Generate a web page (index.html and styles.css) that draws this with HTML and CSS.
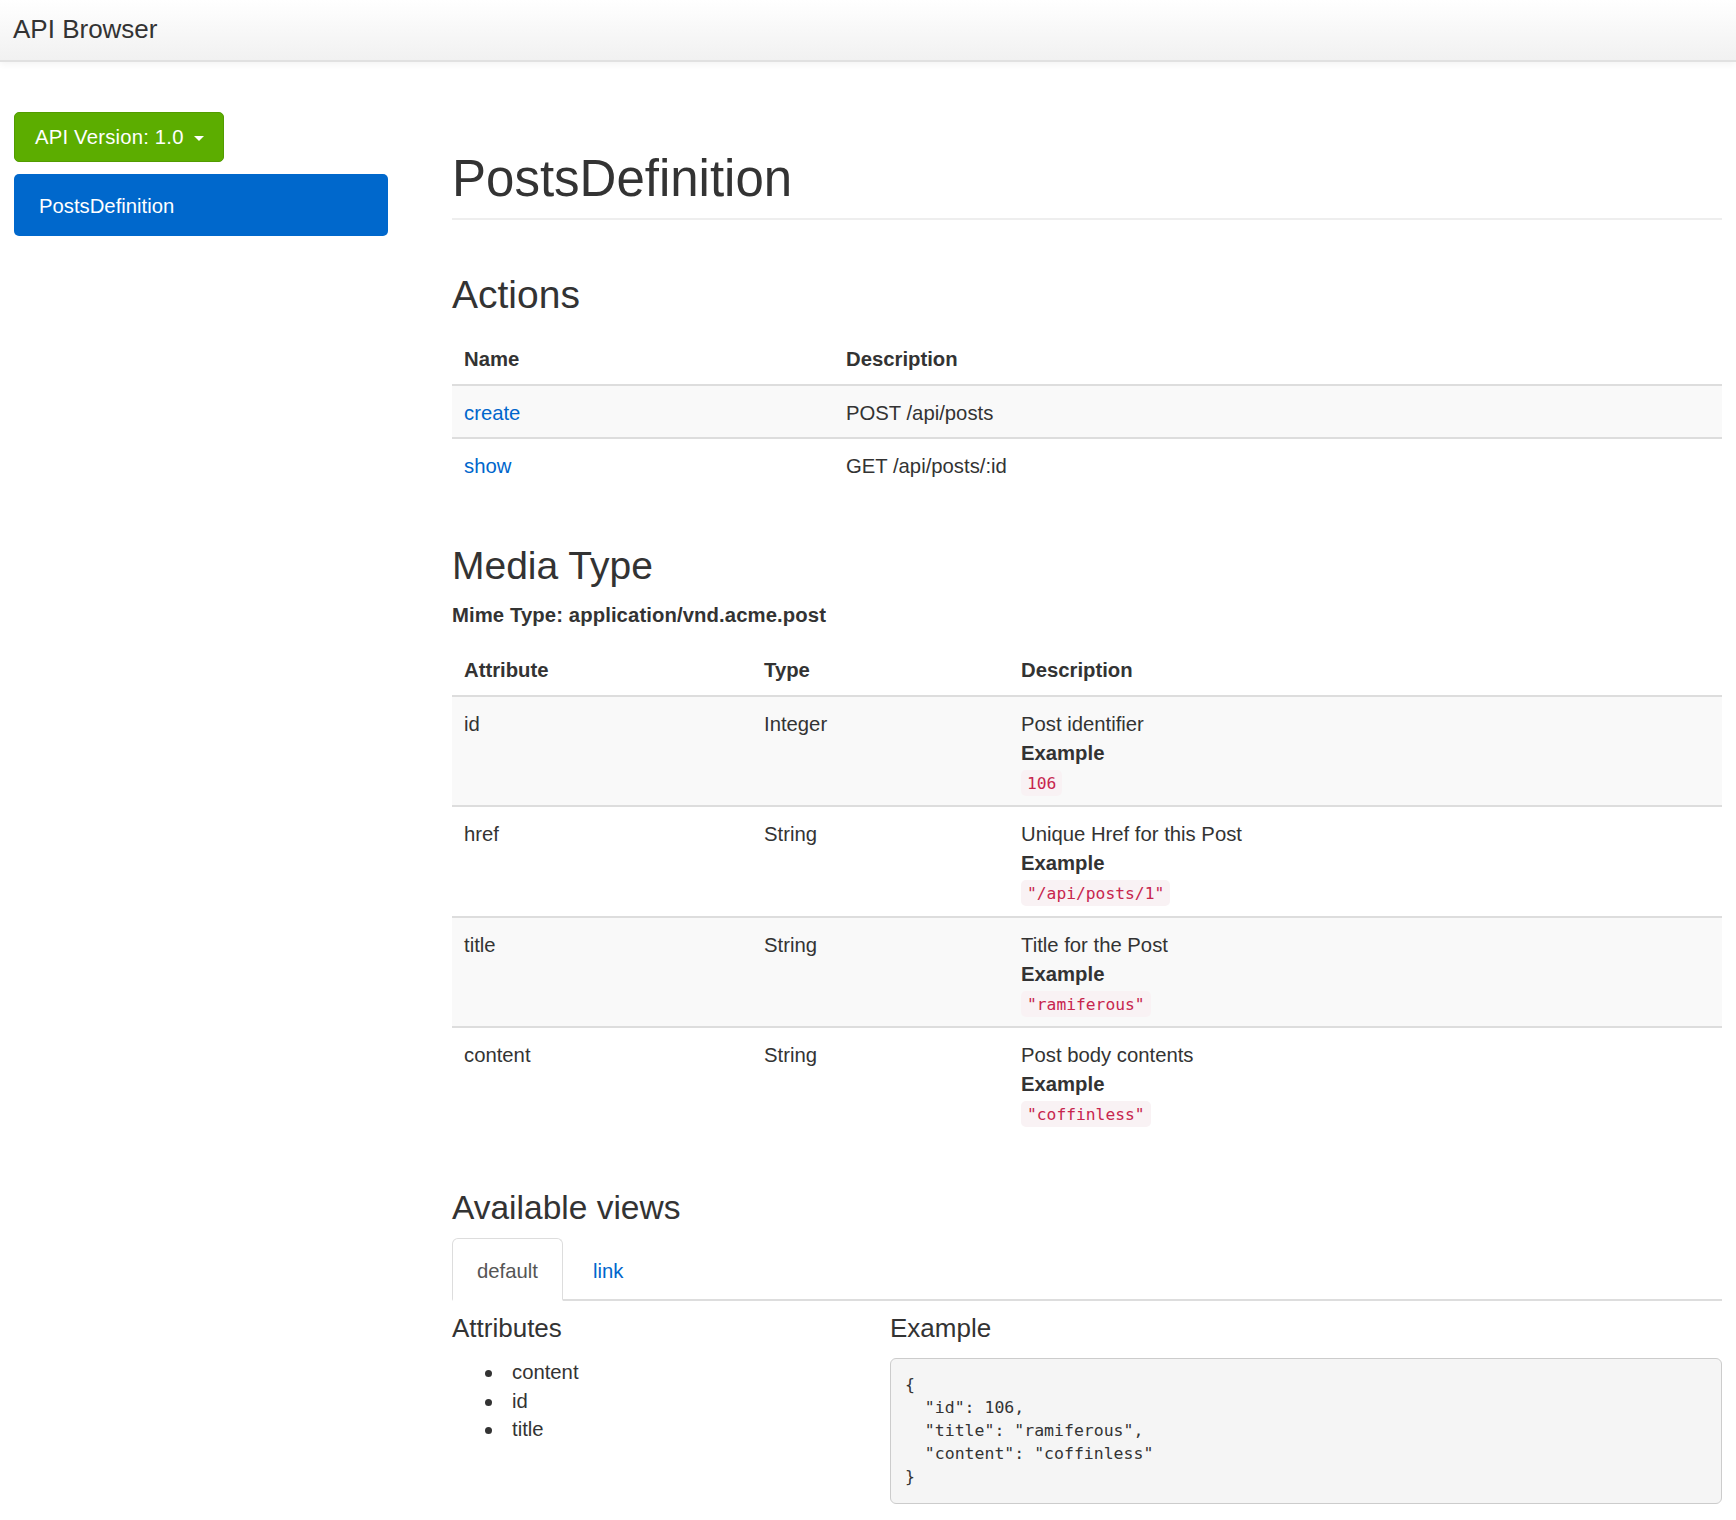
FILE: index.html
```html
<!DOCTYPE html>
<html lang="en">
<head>
<meta charset="utf-8">
<title>API Browser</title>
<link rel="stylesheet" href="styles.css">
</head>
<body>
<header class="navbar">
  <a class="brand">API Browser</a>
</header>
<div class="layout">
  <aside class="sidebar">
    <div class="version-btn">API Version: 1.0<span class="caret"></span></div>
    <div class="nav-pill">PostsDefinition</div>
  </aside>
  <main class="main">
    <h1 class="page-title">PostsDefinition</h1>

    <h2 class="section-title">Actions</h2>
    <table class="table actions-table">
      <thead>
        <tr><th class="col-name">Name</th><th>Description</th></tr>
      </thead>
      <tbody>
        <tr><td><a class="link">create</a></td><td>POST /api/posts</td></tr>
        <tr><td><a class="link">show</a></td><td>GET /api/posts/:id</td></tr>
      </tbody>
    </table>

    <h2 class="section-title media-title">Media Type</h2>
    <p class="mime">Mime Type: application/vnd.acme.post</p>
    <table class="table media-table">
      <thead>
        <tr><th class="col-attr">Attribute</th><th class="col-type">Type</th><th>Description</th></tr>
      </thead>
      <tbody>
        <tr>
          <td>id</td><td>Integer</td>
          <td>Post identifier<br><strong>Example</strong><br><code>106</code></td>
        </tr>
        <tr>
          <td>href</td><td>String</td>
          <td>Unique Href for this Post<br><strong>Example</strong><br><code>"/api/posts/1"</code></td>
        </tr>
        <tr>
          <td>title</td><td>String</td>
          <td>Title for the Post<br><strong>Example</strong><br><code>"ramiferous"</code></td>
        </tr>
        <tr>
          <td>content</td><td>String</td>
          <td>Post body contents<br><strong>Example</strong><br><code>"coffinless"</code></td>
        </tr>
      </tbody>
    </table>

    <h3 class="views-title">Available views</h3>
    <ul class="tabs">
      <li class="tab active"><a>default</a></li>
      <li class="tab"><a class="link">link</a></li>
    </ul>
    <div class="view-grid">
      <div class="view-col">
        <h4 class="sub-title">Attributes</h4>
        <ul class="attr-list">
          <li>content</li>
          <li>id</li>
          <li>title</li>
        </ul>
      </div>
      <div class="view-col">
        <h4 class="sub-title">Example</h4>
<pre class="example">{
  "id": 106,
  "title": "ramiferous",
  "content": "coffinless"
}</pre>
      </div>
    </div>
  </main>
</div>
</body>
</html>
```

FILE: styles.css
```css
* {
  box-sizing: border-box;
}

body {
  margin: 0;
  font-family: "Liberation Sans", Arial, sans-serif;
  font-size: 20.3px;
  line-height: 29px;
  color: #333333;
  background: #ffffff;
}

/* Top bar */
.navbar {
  height: 62px;
  background: linear-gradient(#ffffff, #f1f1f1);
  border-bottom: 2px solid #e1e1e1;
  box-shadow: 0 2px 7px rgba(0, 0, 0, 0.05);
}

.brand {
  display: block;
  padding-left: 13px;
  font-size: 26px;
  line-height: 59px;
  color: #333333;
}

/* Two column layout */
.layout {
  display: grid;
  grid-template-columns: 374px 1fr;
  column-gap: 64px;
  padding: 0 14px;
}

.sidebar {
  padding-top: 50px;
}

.version-btn {
  display: inline-flex;
  align-items: center;
  height: 50px;
  padding: 0 19px 0 20px;
  background: #5cad00;
  border: 1px solid #529c00;
  border-radius: 5px;
  color: #ffffff;
  font-size: 20.3px;
  letter-spacing: 0.2px;
}

.caret {
  width: 0;
  height: 0;
  margin-left: 10px;
  margin-top: 2px;
  border-left: 5px solid transparent;
  border-right: 5px solid transparent;
  border-top: 5px solid #ffffff;
}

.nav-pill {
  margin-top: 12px;
  height: 62px;
  padding: 0 25px;
  line-height: 64px;
  background: #0068cc;
  color: #ffffff;
  border-radius: 5px;
}

/* Main column */
.main {
  min-width: 0;
}

.page-title {
  margin: 89px 0 0;
  padding-bottom: 11px;
  font-size: 51px;
  line-height: 56px;
  font-weight: normal;
  border-bottom: 2px solid #eeeeee;
}

.section-title {
  margin: 52.7px 0 18px;
  font-size: 39px;
  line-height: 43px;
  font-weight: normal;
}

.media-title {
  margin-top: 55px;
  margin-bottom: 14.2px;
}

.mime {
  margin: 0 0 14px;
  font-weight: bold;
  letter-spacing: 0.1px;
}

.link {
  color: #0066cc;
  text-decoration: none;
}

/* Tables */
.table {
  width: 100%;
  border-collapse: collapse;
}

.table th {
  text-align: left;
  padding: 11.5px 12px 10px;
  font-weight: bold;
  border-bottom: 2px solid #dddddd;
}

.table td {
  padding: 13px 12px 8.5px;
  vertical-align: top;
  border-top: 2px solid #dddddd;
}

.table tbody tr:nth-child(odd) td {
  background: #f9f9f9;
}

.col-name {
  width: 382px;
}

.col-attr {
  width: 300px;
}

.col-type {
  width: 257px;
}

code {
  font-family: "DejaVu Sans Mono", "Liberation Mono", monospace;
  font-size: 16.3px;
  line-height: 1;
  padding: 4px 6px 3px;
  color: #c7254e;
  background: #f9f2f4;
  border-radius: 5px;
}

/* Views */
.views-title {
  margin: 52px 0 12.6px;
  font-size: 33.5px;
  line-height: 37px;
  font-weight: normal;
}

.tabs {
  display: flex;
  margin: 0;
  padding: 0;
  list-style: none;
  border-bottom: 2px solid #dddddd;
}

.tab {
  margin-bottom: -2px;
  margin-right: 5px;
}

.tab a {
  display: block;
  padding: 17.8px 24px 13px;
  border: 1px solid transparent;
  border-bottom: 0;
  border-radius: 6px 6px 0 0;
}

.tab.active a {
  color: #555555;
  background: #ffffff;
  border-color: #dddddd;
  border-bottom: 2px solid #ffffff;
}

.view-grid {
  display: grid;
  grid-template-columns: 438px 1fr;
}

.sub-title {
  margin: 13px 0 15.3px;
  font-size: 26px;
  line-height: 28.6px;
  font-weight: normal;
}

.attr-list {
  margin: 0;
  padding-left: 33px;
  list-style: none;
  line-height: 28.5px;
}

.attr-list li::before {
  content: "";
  display: inline-block;
  width: 7px;
  height: 7px;
  margin-right: 20px;
  border-radius: 50%;
  background: #333333;
  vertical-align: middle;
}

.example {
  margin: 0;
  padding: 14px 14px 15px;
  font-family: "DejaVu Sans Mono", "Liberation Mono", monospace;
  font-size: 16.5px;
  line-height: 23px;
  color: #333333;
  background: #f5f5f5;
  border: 1px solid #cccccc;
  border-radius: 6px;
}
```
